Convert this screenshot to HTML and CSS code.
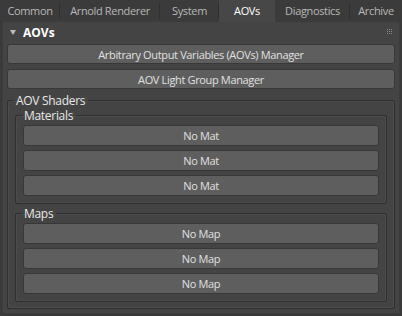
FILE: index.html
```html
<!DOCTYPE html>
<html lang="en">
<head>
    <meta charset="UTF-8">
    <title>Render Setup - AOVs</title>
    <link rel="stylesheet" href="styles.css">
</head>
<body>

    <!-- Tabs -->
    <div class="tabs">
        <div class="tab tab-common">Common</div>
        <div class="tab tab-arnold">Arnold Renderer</div>
        <div class="tab tab-system">System</div>
        <div class="tab tab-aovs active">AOVs</div>
        <div class="tab tab-diag">Diagnostics</div>
        <div class="tab tab-archive last">Archive</div>
    </div>

    <!-- Rollout -->
    <div class="rollout">
        <div class="rollout-title">
            <span class="arrow"></span>
            <span class="title-text">AOVs</span>
            <svg class="grip" width="6" height="6" viewBox="0 0 6 6">
                <g fill="#8a8a8a">
                    <rect x="0" y="0" width="1" height="1"/><rect x="2" y="0" width="1" height="1"/><rect x="4" y="0" width="1" height="1"/>
                    <rect x="0" y="2" width="1" height="1"/><rect x="2" y="2" width="1" height="1"/><rect x="4" y="2" width="1" height="1"/>
                    <rect x="0" y="4" width="1" height="1"/><rect x="2" y="4" width="1" height="1"/><rect x="4" y="4" width="1" height="1"/>
                </g>
            </svg>
        </div>

        <div class="rollout-body">
            <button class="btn">Arbitrary Output Variables (AOVs) Manager</button>
            <button class="btn">AOV Light Group Manager</button>

            <fieldset class="group outer">
                <legend>AOV Shaders</legend>

                <fieldset class="group">
                    <legend>Materials</legend>
                    <button class="btn slot">No Mat</button>
                    <button class="btn slot">No Mat</button>
                    <button class="btn slot">No Mat</button>
                </fieldset>

                <fieldset class="group">
                    <legend>Maps</legend>
                    <button class="btn slot">No Map</button>
                    <button class="btn slot">No Map</button>
                    <button class="btn slot">No Map</button>
                </fieldset>
            </fieldset>
        </div>
    </div>

</body>
</html>
```

FILE: styles.css
```css
body {
    margin: 0;
    padding: 0;
    width: 402px;
    height: 316px;
    background: #3a3a3a;
    font-family: 'Open Sans', 'Noto Sans', sans-serif;
    font-size: 11px;
    letter-spacing: -0.35px;
    color: #dcdcdc;
    overflow: hidden;
}

/* Tabs */
.tabs {
    display: flex;
    height: 22px;
    background: #3b3b3b;
}

.tab {
    position: relative;
    height: 22px;
    line-height: 22px;
    text-align: center;
    color: #b8b8b8;
    white-space: nowrap;
}

.tab::after {
    content: '';
    position: absolute;
    right: 0;
    top: 3px;
    width: 1px;
    height: 16px;
    background: #303030;
}

.tab-common { width: 60px; }
.tab-arnold { width: 100px; }
.tab-system { width: 59px; }
.tab-aovs { width: 56px; }
.tab-diag { width: 75px; }
.tab-archive { width: 52px; }

.tab.active {
    background: #474747;
    color: #ffffff;
}

.tab.active::after,
.tab.last::after {
    display: none;
}

/* Rollout */
.rollout {
    margin: 0 2px 0 2px;
    height: 291px;
    background: #444444;
    border: 1px solid #3c3c3c;
    border-top: none;
}

.rollout-title {
    display: flex;
    align-items: center;
    height: 20px;
    padding: 0 6px 0 6px;
}

.arrow {
    width: 0;
    height: 0;
    border-left: 3px solid transparent;
    border-right: 3px solid transparent;
    border-top: 5px solid #bdbdbd;
    margin: 0 7px 0 1px;
}

.title-text {
    font-weight: bold;
    font-size: 12px;
    letter-spacing: 0;
    color: #ffffff;
    flex: 1;
}

.rollout-body {
    display: flex;
    flex-direction: column;
    padding: 2px 4px 0 4px;
}

.btn {
    height: 20px;
    margin: 0 0 5px 0;
    padding: 0;
    background: #5e5e5e;
    border: 1px solid #383838;
    border-radius: 3px;
    font-family: inherit;
    font-size: 11px;
    letter-spacing: -0.35px;
    color: #e0e0e0;
    text-align: center;
}

.btn.slot {
    height: 21px;
    margin: 0 0 4px 0;
}

/* Groups */
.group {
    display: flex;
    flex-direction: column;
    margin: 0;
    padding: 4px 7px 3px 7px;
    border: 1px solid #2f2f2f;
    border-radius: 2px;
    box-shadow: inset 0 0 0 1px #4c4c4c;
}

.group legend {
    padding: 0 3px 0 2px;
    margin-left: -1px;
    font-size: 12px;
    letter-spacing: -0.3px;
    color: #e8e8e8;
    line-height: 11px;
}

.group.outer {
    margin-top: 1px;
    padding: 4px 7px 6px 7px;
}

.group.outer > .group + .group {
    margin-top: 4px;
}
```
